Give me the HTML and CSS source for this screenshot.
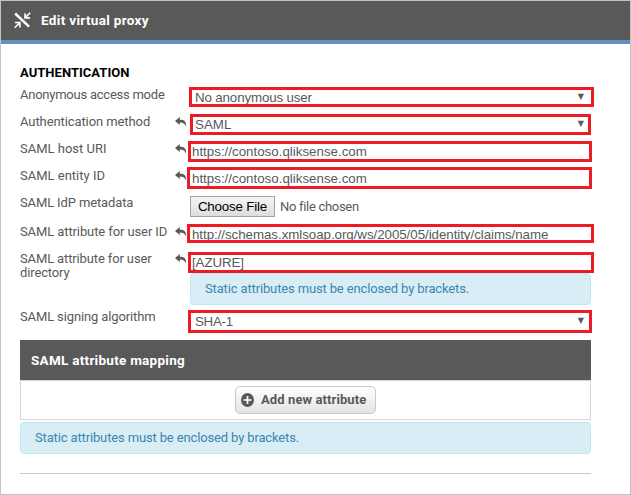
FILE: index.html
```html
<!DOCTYPE html>
<html lang="en">
<head>
<meta charset="utf-8">
<title>Edit virtual proxy</title>
<link rel="stylesheet" href="styles.css">
</head>
<body>
<svg class="defs" width="0" height="0"><symbol id="undo" viewBox="0 0 12 10"><path d="M0 4L4.8 0V2.7C9 2.6 11.5 4.4 11 9.4C10 6.7 8.2 5.5 4.8 5.5V8Z"/></symbol></svg>
<div class="window">
  <header class="bar">
    <svg class="bar-icon" width="17" height="17" viewBox="0 0 17 17"><path d="M1.2 1.5L15 14.7" stroke-width="2.5"/><path d="M16.2 .7L11.5 5.4M11 1.2V5.9H16M.7 15.7L5.4 11M1 10.5H5.9V15.5" stroke-width="1.6"/></svg>
    <h1>Edit virtual proxy</h1>
  </header>
  <main>
    <h2>AUTHENTICATION</h2>
    <div class="row"><label class="l-anon">Anonymous access mode</label><i></i><div class="field select anon"><span>No anonymous user</span><b>▼</b></div></div>
    <div class="row"><label class="l-auth">Authentication method</label><svg class="undo"><use href="#undo"/></svg><div class="field select method"><span>SAML</span><b>▼</b></div></div>
    <div class="row"><label class="l-host">SAML host URI</label><svg class="undo"><use href="#undo"/></svg><div class="field host"><span>https://contoso.qliksense.com</span></div></div>
    <div class="row"><label class="l-host">SAML entity ID</label><svg class="undo"><use href="#undo"/></svg><div class="field entity"><span>https://contoso.qliksense.com</span></div></div>
    <div class="row file-row"><label>SAML IdP metadata</label><i></i><div class="file"><button>Choose File</button><span>No file chosen</span></div></div>
    <div class="row"><label class="l-user">SAML attribute for user ID</label><svg class="undo"><use href="#undo"/></svg><div class="field user"><span>http://schemas.xmlsoap.org/ws/2005/05/identity/claims/name</span></div></div>
    <div class="row directory-row"><label>SAML attribute for user<br>directory</label><svg class="undo"><use href="#undo"/></svg><div><div class="field directory"><span>[AZURE]</span></div><div class="info"><span>Static attributes must be enclosed by brackets.</span></div></div></div>
    <div class="row"><label>SAML signing algorithm</label><i></i><div class="field select signing"><span>SHA-1</span><b>▼</b></div></div>
    <section class="mapping">
      <h3>SAML attribute mapping</h3>
      <div class="add-row"><button class="add"><svg width="13" height="14" viewBox="0 0 13 14"><ellipse cx="6.5" cy="7" rx="6.5" ry="7"/><path d="M6.5 3V11M2.5 7H10.5"/></svg><span>Add new attribute</span></button></div>
      <div class="info"><span>Static attributes must be enclosed by brackets.</span></div>
    </section>
    <hr>
  </main>
</div>
</body>
</html>
```
FILE: styles.css
```css
* { box-sizing: border-box; }
body { margin: 0; background: #fff; color: #595959; font: 13px/14px Roboto, "Liberation Sans", sans-serif; }
.defs { display: none; }
.window { width: 631px; height: 495px; border: 1px solid #c3c3c3; overflow: hidden; }
.bar { height: 43px; background: #595959; border-bottom: 4px solid #6491c1; display: flex; padding: 11px 0 0 13px; gap: 10px; color: #fff; }
.bar-icon { fill: none; stroke: #fff; }
h1, h2, h3 { margin: 0; font-weight: 700; white-space: nowrap; }
h1 { font-size: 13.5px; line-height: 17px; letter-spacing: .33px; }
main { padding: 20px 39px 0 19px; }
h2 { font-size: 13px; line-height: 17px; letter-spacing: .03px; color: #000; height: 23px; }
.row { display: grid; grid-template-columns: 155px 15px 401px; height: 27px; }
label { padding-top: 1px; white-space: nowrap; letter-spacing: -.13px; }
.l-anon { letter-spacing: -.24px; }
.l-auth { letter-spacing: -.09px; }
.l-host { letter-spacing: 0; }
.l-user { letter-spacing: -.1px; }
.undo { width: 12px; height: 10px; margin-top: 3px; fill: #595959; }
.field { display: flex; align-items: center; border: 3px solid #ed1c24; font: 13.33px/15px "Liberation Sans", Arial, sans-serif; white-space: nowrap; overflow: hidden; }
.select { justify-content: space-between; letter-spacing: -.14px; }
.field b { font: 8px/12px "DejaVu Sans", sans-serif; letter-spacing: 0; margin-top: -1px; }
.anon { width: 405px; height: 20px; margin-left: -1px; padding: 0 7px 0 3px; }
.method { height: 21px; padding: 0 4px 0 2px; letter-spacing: 0; }
.host { width: 404px; height: 21px; margin-left: -2px; padding-left: 1px; }
.entity { width: 405px; height: 22px; margin: -1px 0 0 -3px; padding-left: 2px; }
.file-row { height: 29px; }
.file { display: flex; gap: 5px; align-items: center; height: 21px; margin-top: 1px; letter-spacing: -.3px; }
.file button { width: 85px; height: 21px; padding: 0; border: 1px solid #a3a3a3; background: linear-gradient(#f5f5f5, #ddd); font: 13.33px/17px "Liberation Sans", Arial, sans-serif; letter-spacing: -.18px; color: #000; }
.user { width: 407px; height: 19px; margin-left: -3px; padding: 2px 0 0 2px; letter-spacing: -.05px; }
.directory-row { height: 58px; }
.directory { width: 406px; height: 21px; margin: 1px 0 0 -2px; padding: 0 0 1px 1px; letter-spacing: -.1px; }
.info { height: 32px; display: flex; align-items: center; padding-left: 14px; border: 1px solid #bce8f1; border-radius: 4px; background: #d9edf7; color: #3a87ad; letter-spacing: -.14px; white-space: nowrap; }
.signing { width: 404px; height: 23px; margin: 1px 0 0 -2px; padding: 0 5px 0 4px; letter-spacing: -.3px; }
.mapping { margin-top: 4px; }
h3 { height: 40px; padding-left: 11px; background: #595959; color: #fff; font-size: 13.5px; line-height: 41px; letter-spacing: .27px; }
.add-row { height: 40px; border: 1px solid #d5d5d5; margin-bottom: 2px; display: flex; justify-content: center; align-items: center; }
.add { width: 141px; height: 28px; padding: 0 0 0 5px; display: flex; align-items: center; gap: 7px; border: 1px solid #c8c8c8; border-radius: 5px; background: linear-gradient(#fff, #e3e3e3); color: #595959; font: 700 13px/16px Roboto, sans-serif; letter-spacing: .1px; white-space: nowrap; }
.add ellipse { fill: #595959; }
.add path { stroke: #fff; stroke-width: 1.7; }
hr { margin: 19px 0 0; border: 0; border-top: 1px solid #c8c8c8; }
```
